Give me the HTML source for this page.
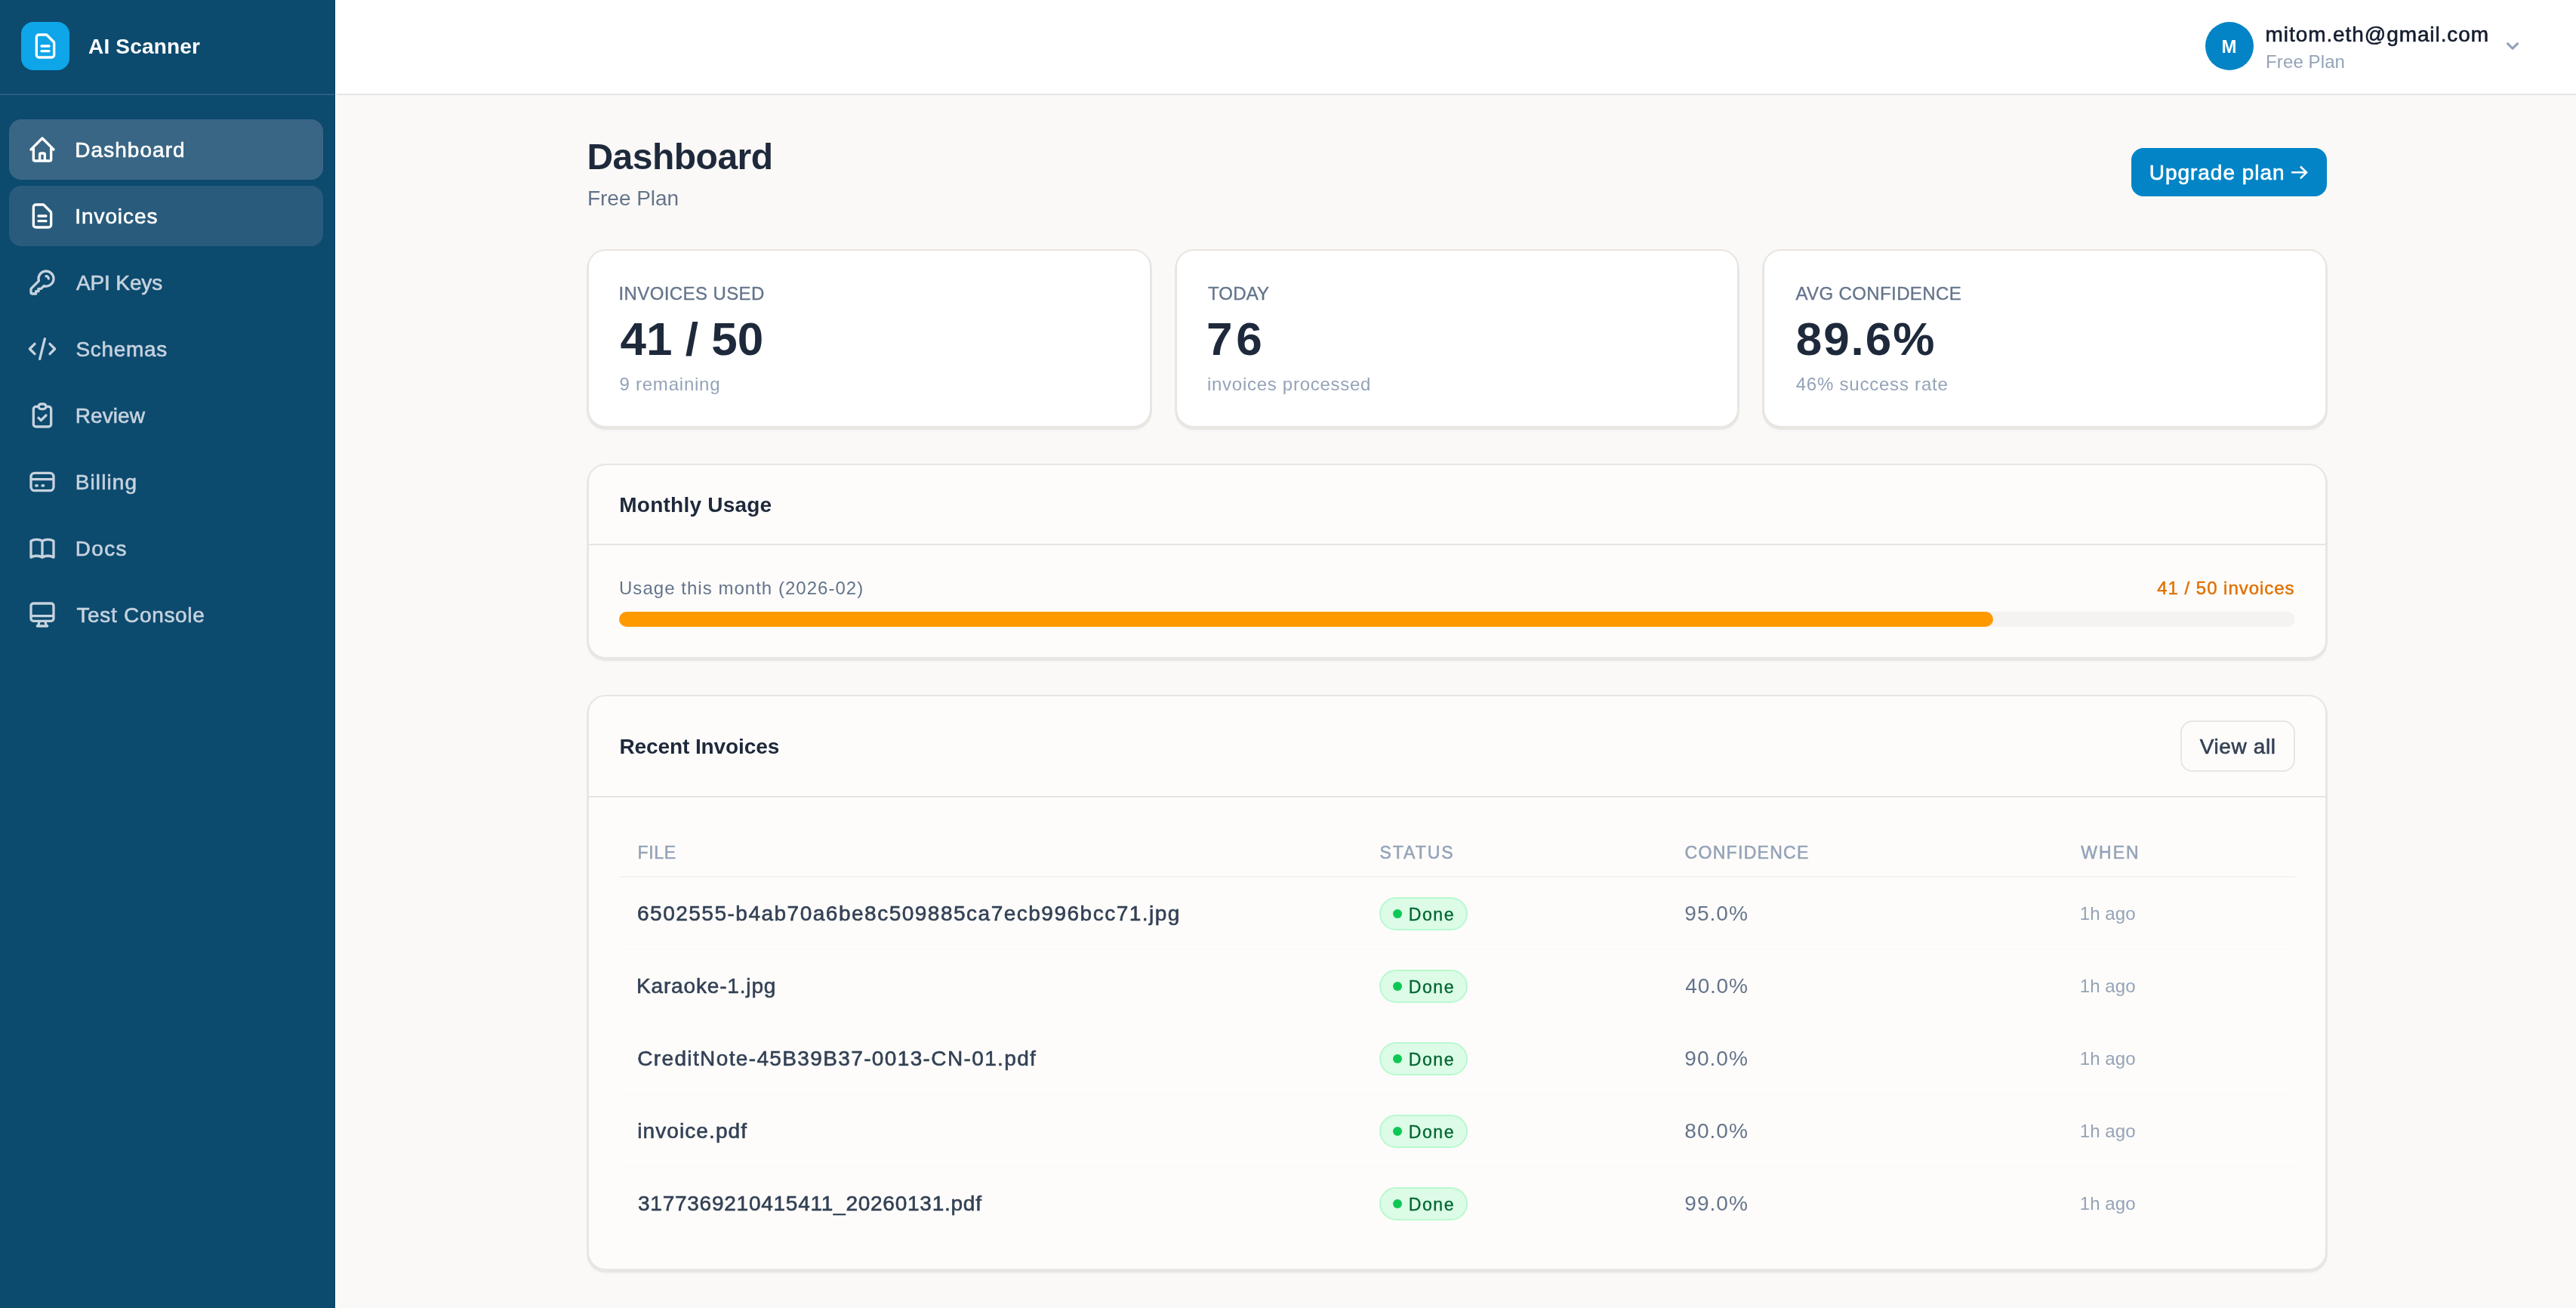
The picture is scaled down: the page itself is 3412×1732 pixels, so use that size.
<!DOCTYPE html>
<html lang="en">
<head>
<meta charset="utf-8">
<title>AI Scanner - Dashboard</title>
<style>
*{box-sizing:border-box;margin:0;padding:0}
html,body{width:3412px;height:1732px;overflow:hidden;background:#faf9f7}
body{font-family:"Liberation Sans",sans-serif;position:relative}
#root{position:absolute;left:0;top:0;width:3412px;height:1732px;overflow:hidden;will-change:transform}
@media (max-width:1800px){html,body{width:1706px;height:866px}#root{zoom:.5}}
.t{position:absolute;white-space:nowrap;display:block;text-decoration:none;font-style:normal}
#side{position:absolute;left:0;top:0;width:444px;height:1732px;background:#0c4a6e;border-right:1px solid #09416a}
#sidehr{position:absolute;left:0;top:124px;width:443px;height:2px;background:#2a5f81}
#logo{position:absolute;left:28px;top:29px;width:64px;height:64px;border-radius:16px;background:#0ea5e9}
.nav{position:absolute;left:12px;width:416px;height:80px;border-radius:16px}
.nav.on{background:#3a6685}
.nav.hov{background:#295b7c}
#top{position:absolute;left:445px;top:0;width:2967px;height:126px;background:#fff;border-bottom:2px solid #e7e5e4}
#gap{position:absolute;left:444px;top:0;width:1px;height:1732px;background:#fff}
#av{position:absolute;left:2921px;top:29px;width:64px;height:64px;border-radius:50%;background:#0284c7}
.card{position:absolute;background:#fff;border:2px solid #e8e5e2;border-radius:24px;box-shadow:0 2px 0 1px #e9e6e3,0 5px 3px 0 rgba(0,0,0,.022)}
.card.soft{background:#fdfcfa}
.hr{position:absolute;height:2px;background:#e7e5e4}
.hr.l{background:#fafaf8}
#up{position:absolute;left:2823px;top:196px;width:259px;height:64px;border-radius:16px;background:#0284c7}
#va{position:absolute;left:2888px;top:954px;width:152px;height:68px;border-radius:16px;border:2px solid #e8e5e2;background:#fdfcfa}
#track{position:absolute;left:820px;top:810px;width:2220px;height:20px;border-radius:10px;background:#f4f3f1}
#fill{position:absolute;left:820px;top:810px;width:1820px;height:20px;border-radius:10px;background:#fe9a00}
.badge{position:absolute;left:1827px;width:117px;height:44px;border-radius:22px;border:2px solid #b9f8cf;background:#dcfce7}
.badge i{position:absolute;left:16px;top:14px;width:12px;height:12px;border-radius:50%;background:#0dc954}
</style>
</head>
<body>
<div id="root">
<aside id="sidebar">
<div id="side"></div><div id="gap"></div><div id="sidehr"></div>
<div id="logo"></div><svg style="position:absolute;left:40px;top:41px;width:40px;height:40px" viewBox="0 0 24 24" fill="none" stroke="#ffffff" stroke-width="2" stroke-linecap="round" stroke-linejoin="round"><path d="M9 12h6m-6 4h6m2 5H7a2 2 0 01-2-2V5a2 2 0 012-2h5.586a1 1 0 01.707.293l5.414 5.414a1 1 0 01.293.707V19a2 2 0 01-2 2z"/></svg>
<strong class="t" style="left:117.00px;top:42px;font-size:28px;line-height:39px;font-weight:700;color:#ffffff;letter-spacing:0.18px">AI Scanner</strong>
<nav>
<div class="nav on" style="top:158px"></div>
<svg style="position:absolute;left:36px;top:178px;width:40px;height:40px" viewBox="0 0 24 24" fill="none" stroke="#ffffff" stroke-width="2" stroke-linecap="round" stroke-linejoin="round"><path d="M3 12l2-2m0 0l7-7 7 7M5 10v10a1 1 0 001 1h3m10-11l2 2m-2-2v10a1 1 0 01-1 1h-3m-6 0a1 1 0 001-1v-4a1 1 0 011-1h2a1 1 0 011 1v4a1 1 0 001 1m-6 0h6"/></svg>
<a class="t" style="left:99.30px;top:179px;font-size:28px;line-height:39px;font-weight:400;color:#ffffff;letter-spacing:1.04px;-webkit-text-stroke:0.60px">Dashboard</a>
<div class="nav hov" style="top:246px"></div>
<svg style="position:absolute;left:36px;top:266px;width:40px;height:40px" viewBox="0 0 24 24" fill="none" stroke="#ffffff" stroke-width="2" stroke-linecap="round" stroke-linejoin="round"><path d="M9 12h6m-6 4h6m2 5H7a2 2 0 01-2-2V5a2 2 0 012-2h5.586a1 1 0 01.707.293l5.414 5.414a1 1 0 01.293.707V19a2 2 0 01-2 2z"/></svg>
<a class="t" style="left:99.30px;top:267px;font-size:28px;line-height:39px;font-weight:400;color:#ffffff;letter-spacing:0.91px;-webkit-text-stroke:0.60px">Invoices</a>
<div class="nav" style="top:334px"></div>
<svg style="position:absolute;left:36px;top:354px;width:40px;height:40px" viewBox="0 0 24 24" fill="none" stroke="#c6d2de" stroke-width="2" stroke-linecap="round" stroke-linejoin="round"><path d="M15 7a2 2 0 012 2m4 0a6 6 0 01-7.743 5.743L11 17H9v2H7v2H4a1 1 0 01-1-1v-2.586a1 1 0 01.293-.707l5.964-5.964A6 6 0 1121 9z"/></svg>
<a class="t" style="left:101.00px;top:355px;font-size:28px;line-height:39px;font-weight:400;color:#c6d2de;letter-spacing:-0.14px;-webkit-text-stroke:0.60px">API Keys</a>
<div class="nav" style="top:422px"></div>
<svg style="position:absolute;left:36px;top:442px;width:40px;height:40px" viewBox="0 0 24 24" fill="none" stroke="#c6d2de" stroke-width="2" stroke-linecap="round" stroke-linejoin="round"><path d="M10 20l4-16m4 4l4 4-4 4M6 16l-4-4 4-4"/></svg>
<a class="t" style="left:100.40px;top:443px;font-size:28px;line-height:39px;font-weight:400;color:#c6d2de;letter-spacing:0.68px;-webkit-text-stroke:0.60px">Schemas</a>
<div class="nav" style="top:510px"></div>
<svg style="position:absolute;left:36px;top:530px;width:40px;height:40px" viewBox="0 0 24 24" fill="none" stroke="#c6d2de" stroke-width="2" stroke-linecap="round" stroke-linejoin="round"><path d="M9 5H7a2 2 0 00-2 2v12a2 2 0 002 2h10a2 2 0 002-2V7a2 2 0 00-2-2h-2M9 5a2 2 0 002 2h2a2 2 0 002-2M9 5a2 2 0 012-2h2a2 2 0 012 2m-6 9l2 2 4-4"/></svg>
<a class="t" style="left:99.70px;top:531px;font-size:28px;line-height:39px;font-weight:400;color:#c6d2de;letter-spacing:0.10px;-webkit-text-stroke:0.60px">Review</a>
<div class="nav" style="top:598px"></div>
<svg style="position:absolute;left:36px;top:618px;width:40px;height:40px" viewBox="0 0 24 24" fill="none" stroke="#c6d2de" stroke-width="2" stroke-linecap="round" stroke-linejoin="round"><path d="M3 10h18M7 15h1m4 0h1m-7 4h12a3 3 0 003-3V8a3 3 0 00-3-3H6a3 3 0 00-3 3v8a3 3 0 003 3z"/></svg>
<a class="t" style="left:99.70px;top:619px;font-size:28px;line-height:39px;font-weight:400;color:#c6d2de;letter-spacing:1.11px;-webkit-text-stroke:0.60px">Billing</a>
<div class="nav" style="top:686px"></div>
<svg style="position:absolute;left:36px;top:706px;width:40px;height:40px" viewBox="0 0 24 24" fill="none" stroke="#c6d2de" stroke-width="2" stroke-linecap="round" stroke-linejoin="round"><path d="M12 6.253v13m0-13C10.832 5.477 9.246 5 7.5 5S4.168 5.477 3 6.253v13C4.168 18.477 5.754 18 7.5 18s3.332.477 4.5 1.253m0-13C13.168 5.477 14.754 5 16.5 5c1.747 0 3.332.477 4.5 1.253v13C19.832 18.477 18.247 18 16.5 18c-1.746 0-3.332.477-4.5 1.253"/></svg>
<a class="t" style="left:99.70px;top:707px;font-size:28px;line-height:39px;font-weight:400;color:#c6d2de;letter-spacing:1.34px;-webkit-text-stroke:0.60px">Docs</a>
<div class="nav" style="top:774px"></div>
<svg style="position:absolute;left:36px;top:794px;width:40px;height:40px" viewBox="0 0 24 24" fill="none" stroke="#c6d2de" stroke-width="2" stroke-linecap="round" stroke-linejoin="round"><path d="M9.75 17L9 20l-1 1h8l-1-1-.75-3M3 13h18M5 17h14a2 2 0 002-2V5a2 2 0 00-2-2H5a2 2 0 00-2 2v10a2 2 0 002 2z"/></svg>
<a class="t" style="left:101.40px;top:795px;font-size:28px;line-height:39px;font-weight:400;color:#c6d2de;letter-spacing:0.69px;-webkit-text-stroke:0.60px">Test Console</a>
</nav>
</aside>
<header id="topbar">
<div id="top"></div><div id="av"></div>
<span class="t" style="left:2942.60px;top:44px;font-size:24px;line-height:35px;font-weight:700;color:#ffffff;letter-spacing:0.00px">M</span>
<span class="t" style="left:3000.60px;top:26px;font-size:28px;line-height:39px;font-weight:400;color:#131c2f;letter-spacing:0.92px;-webkit-text-stroke:0.60px">mitom.eth@gmail.com</span>
<span class="t" style="left:3001.10px;top:64px;font-size:24px;line-height:35px;font-weight:400;color:#94a3b8;letter-spacing:0.10px">Free Plan</span>
<svg style="position:absolute;left:3312px;top:45px;width:32px;height:32px" viewBox="0 0 20 20" fill="#94a3b8"><path fill-rule="evenodd" clip-rule="evenodd" d="M5.293 7.293a1 1 0 011.414 0L10 10.586l3.293-3.293a1 1 0 111.414 1.414l-4 4a1 1 0 01-1.414 0l-4-4a1 1 0 010-1.414z"/></svg>
</header>
<main id="content">
<section id="page-head">
<div id="up"></div><svg style="position:absolute;left:3030px;top:214px;width:32px;height:28px" viewBox="0 0 32 28" fill="none" stroke="#fff" stroke-width="2.6" stroke-linejoin="miter"><path d="M5.2 14.3H24.6M17 6.5l8 7.8-8 7.9"/></svg>
<h1 class="t" style="left:777.40px;top:177px;font-size:48px;line-height:61px;font-weight:700;color:#1e293b;letter-spacing:-0.50px">Dashboard</h1>
<p class="t" style="left:778.00px;top:243px;font-size:28px;line-height:39px;font-weight:400;color:#64748b;letter-spacing:-0.04px">Free Plan</p>
<a class="t" style="left:2846.80px;top:209px;font-size:28px;line-height:39px;font-weight:400;color:#ffffff;letter-spacing:0.96px;-webkit-text-stroke:0.60px">Upgrade plan</a>
</section>
<section id="stats">
<div class="card" style="left:778px;top:330px;width:746.67px;height:236px"></div>
<span class="t" style="left:819.40px;top:371px;font-size:24px;line-height:35px;font-weight:400;color:#64748b;letter-spacing:0.41px;-webkit-text-stroke:0.35px">INVOICES USED</span>
<span class="t" style="left:821.40px;top:410px;font-size:62px;line-height:77px;font-weight:700;color:#1e293b;letter-spacing:0.03px">41 / 50</span>
<span class="t" style="left:820.40px;top:491px;font-size:24px;line-height:35px;font-weight:400;color:#94a3b8;letter-spacing:0.78px">9 remaining</span>
<div class="card" style="left:1556.67px;top:330px;width:746.67px;height:236px"></div>
<span class="t" style="left:1600.00px;top:371px;font-size:24px;line-height:35px;font-weight:400;color:#64748b;letter-spacing:0.14px;-webkit-text-stroke:0.35px">TODAY</span>
<span class="t" style="left:1598.00px;top:410px;font-size:62px;line-height:77px;font-weight:700;color:#1e293b;letter-spacing:4.72px">76</span>
<span class="t" style="left:1599.00px;top:491px;font-size:24px;line-height:35px;font-weight:400;color:#94a3b8;letter-spacing:0.72px">invoices processed</span>
<div class="card" style="left:2335.33px;top:330px;width:746.67px;height:236px"></div>
<span class="t" style="left:2378.40px;top:371px;font-size:24px;line-height:35px;font-weight:400;color:#64748b;letter-spacing:0.39px;-webkit-text-stroke:0.35px">AVG CONFIDENCE</span>
<span class="t" style="left:2378.70px;top:410px;font-size:62px;line-height:77px;font-weight:700;color:#1e293b;letter-spacing:1.96px">89.6%</span>
<span class="t" style="left:2378.70px;top:491px;font-size:24px;line-height:35px;font-weight:400;color:#94a3b8;letter-spacing:0.78px">46% success rate</span>
</section>
<section id="monthly-usage">
<div class="card soft" style="left:778px;top:614px;width:2304px;height:258px"></div>
<div class="hr" style="left:780px;top:720px;width:2300px"></div>
<div id="track"></div><div id="fill"></div>
<h2 class="t" style="left:820.30px;top:649px;font-size:28px;line-height:39px;font-weight:700;color:#1e293b;letter-spacing:0.23px">Monthly Usage</h2>
<span class="t" style="left:820.00px;top:761px;font-size:24px;line-height:35px;font-weight:400;color:#64748b;letter-spacing:1.03px">Usage this month (2026-02)</span>
<span class="t" style="left:2857.30px;top:761px;font-size:24px;line-height:35px;font-weight:400;color:#e17100;letter-spacing:0.97px;-webkit-text-stroke:0.50px">41 / 50 invoices</span>
</section>
<section id="recent-invoices">
<div class="card soft" style="left:778px;top:920px;width:2304px;height:762px"></div>
<div class="hr" style="left:780px;top:1054px;width:2300px"></div>
<div id="va"></div>
<h2 class="t" style="left:820.40px;top:969px;font-size:28px;line-height:39px;font-weight:700;color:#1e293b;letter-spacing:-0.09px">Recent Invoices</h2>
<a class="t" style="left:2913.70px;top:969px;font-size:28px;line-height:39px;font-weight:400;color:#334155;letter-spacing:0.62px;-webkit-text-stroke:0.60px">View all</a>
<div class="thead">
<div class="hr l" style="left:820px;top:1160px;width:2220px;background:#f4f3f1"></div>
<span class="t" style="left:844.40px;top:1112px;font-size:23px;line-height:34px;font-weight:400;color:#94a3b8;letter-spacing:0.72px;-webkit-text-stroke:0.55px">FILE</span>
<span class="t" style="left:1827.50px;top:1112px;font-size:23px;line-height:34px;font-weight:400;color:#94a3b8;letter-spacing:1.94px;-webkit-text-stroke:0.55px">STATUS</span>
<span class="t" style="left:2231.60px;top:1112px;font-size:23px;line-height:34px;font-weight:400;color:#94a3b8;letter-spacing:1.30px;-webkit-text-stroke:0.55px">CONFIDENCE</span>
<span class="t" style="left:2756.30px;top:1112px;font-size:23px;line-height:34px;font-weight:400;color:#94a3b8;letter-spacing:2.01px;-webkit-text-stroke:0.55px">WHEN</span>
</div>
<div class="row">
<div class="badge" style="top:1188px"><i></i></div>
<span class="t" style="left:844.00px;top:1190px;font-size:28px;line-height:39px;font-weight:400;color:#334155;letter-spacing:1.50px;-webkit-text-stroke:0.60px">6502555-b4ab70a6be8c509885ca7ecb996bcc71.jpg</span>
<span class="t" style="left:1865.70px;top:1194px;font-size:23px;line-height:34px;font-weight:400;color:#016630;letter-spacing:1.64px;-webkit-text-stroke:0.35px">Done</span>
<span class="t" style="left:2231.30px;top:1190px;font-size:28px;line-height:39px;font-weight:400;color:#64748b;letter-spacing:1.05px">95.0%</span>
<span class="t" style="left:2754.80px;top:1192px;font-size:24px;line-height:35px;font-weight:400;color:#94a3b8;letter-spacing:0.07px">1h ago</span>
</div>
<div class="row">
<div class="hr l" style="left:820px;top:1256px;width:2220px"></div>
<div class="badge" style="top:1284px"><i></i></div>
<span class="t" style="left:843.00px;top:1286px;font-size:28px;line-height:39px;font-weight:400;color:#334155;letter-spacing:0.84px;-webkit-text-stroke:0.60px">Karaoke-1.jpg</span>
<span class="t" style="left:1865.70px;top:1290px;font-size:23px;line-height:34px;font-weight:400;color:#016630;letter-spacing:1.64px;-webkit-text-stroke:0.35px">Done</span>
<span class="t" style="left:2232.30px;top:1286px;font-size:28px;line-height:39px;font-weight:400;color:#64748b;letter-spacing:0.80px">40.0%</span>
<span class="t" style="left:2754.80px;top:1288px;font-size:24px;line-height:35px;font-weight:400;color:#94a3b8;letter-spacing:0.07px">1h ago</span>
</div>
<div class="row">
<div class="hr l" style="left:820px;top:1352px;width:2220px"></div>
<div class="badge" style="top:1380px"><i></i></div>
<span class="t" style="left:844.20px;top:1382px;font-size:28px;line-height:39px;font-weight:400;color:#334155;letter-spacing:1.37px;-webkit-text-stroke:0.60px">CreditNote-45B39B37-0013-CN-01.pdf</span>
<span class="t" style="left:1865.70px;top:1386px;font-size:23px;line-height:34px;font-weight:400;color:#016630;letter-spacing:1.64px;-webkit-text-stroke:0.35px">Done</span>
<span class="t" style="left:2231.30px;top:1382px;font-size:28px;line-height:39px;font-weight:400;color:#64748b;letter-spacing:1.05px">90.0%</span>
<span class="t" style="left:2754.80px;top:1384px;font-size:24px;line-height:35px;font-weight:400;color:#94a3b8;letter-spacing:0.07px">1h ago</span>
</div>
<div class="row">
<div class="hr l" style="left:820px;top:1448px;width:2220px"></div>
<div class="badge" style="top:1476px"><i></i></div>
<span class="t" style="left:844.20px;top:1478px;font-size:28px;line-height:39px;font-weight:400;color:#334155;letter-spacing:1.10px;-webkit-text-stroke:0.60px">invoice.pdf</span>
<span class="t" style="left:1865.70px;top:1482px;font-size:23px;line-height:34px;font-weight:400;color:#016630;letter-spacing:1.64px;-webkit-text-stroke:0.35px">Done</span>
<span class="t" style="left:2231.30px;top:1478px;font-size:28px;line-height:39px;font-weight:400;color:#64748b;letter-spacing:1.05px">80.0%</span>
<span class="t" style="left:2754.80px;top:1480px;font-size:24px;line-height:35px;font-weight:400;color:#94a3b8;letter-spacing:0.07px">1h ago</span>
</div>
<div class="row">
<div class="hr l" style="left:820px;top:1544px;width:2220px"></div>
<div class="badge" style="top:1572px"><i></i></div>
<span class="t" style="left:845.00px;top:1574px;font-size:28px;line-height:39px;font-weight:400;color:#334155;letter-spacing:0.75px;-webkit-text-stroke:0.60px">3177369210415411_20260131.pdf</span>
<span class="t" style="left:1865.70px;top:1578px;font-size:23px;line-height:34px;font-weight:400;color:#016630;letter-spacing:1.64px;-webkit-text-stroke:0.35px">Done</span>
<span class="t" style="left:2231.30px;top:1574px;font-size:28px;line-height:39px;font-weight:400;color:#64748b;letter-spacing:1.05px">99.0%</span>
<span class="t" style="left:2754.80px;top:1576px;font-size:24px;line-height:35px;font-weight:400;color:#94a3b8;letter-spacing:0.07px">1h ago</span>
</div>
</section>
</main>
</div>
</body>
</html>
